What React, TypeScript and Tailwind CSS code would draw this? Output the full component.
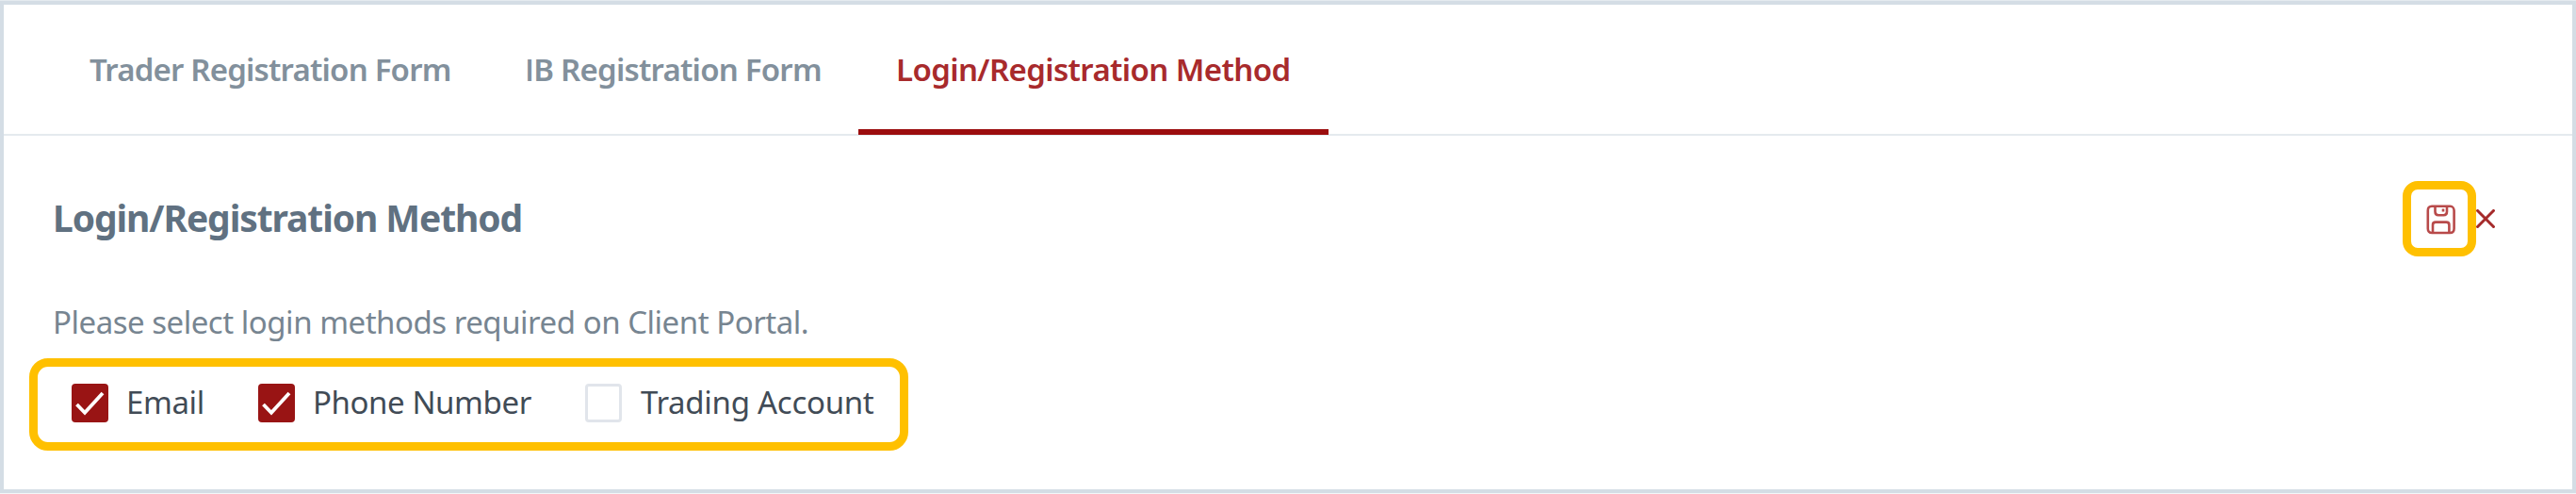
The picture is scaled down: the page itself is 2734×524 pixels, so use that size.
import { useState } from 'react';
import clsx from 'clsx';

const TABS = [
  { id: 'trader', width: 'w-[462px]', tracking: 'tracking-[-0.81px]' },
  { id: 'ib', width: 'w-[394px]', tracking: 'tracking-[-0.78px]' },
  { id: 'login', width: 'w-[499px]', tracking: 'tracking-[-0.62px]' },
];

const METHODS = [
  { id: 'email', label: 'Email', width: 'w-[198px]', gap: 'gap-[19px]', tracking: 'tracking-[-0.4px]' },
  { id: 'phone', label: 'Phone Number', width: 'w-[347px]', gap: 'gap-[19px]', tracking: 'tracking-[-0.41px]' },
  { id: 'account', label: 'Trading Account', width: 'w-[320px]', gap: 'gap-[20px]', tracking: 'tracking-[-0.28px]' },
];

function SaveIcon() {
  return (
    <svg width="32" height="32" viewBox="0 0 32 32" fill="none" stroke="#b84a4a" strokeWidth="2.6">
      <path d="M6 1.8H25.5C28 1.8 29.6 4 29.6 6.5V25.5Q29.6 30 25.2 30H6.2Q1.8 30 1.8 25.5V6.2Q1.8 1.8 6 1.8Z" />
      <path d="M9.5 2V7.5Q9.5 11.2 13 11.2H18.5Q22 11.2 22 7.5V2" />
      <path d="M18 4.5V7.5" />
      <path d="M7 30V21.5Q7 18.6 10 18.6H21.4Q24.4 18.6 24.4 21.5V30" />
    </svg>
  );
}

function CloseIcon() {
  return (
    <svg width="20" height="20" viewBox="0 0 20 20" fill="none" stroke="#a52a2a" strokeWidth="3">
      <path d="M0.5 0.5L19.5 19.5M19.5 0.5L0.5 19.5" />
    </svg>
  );
}

function Checkbox({ checked }: { checked: boolean }) {
  return (
    <span
      className={clsx(
        'h-[41px] w-[39px] shrink-0 rounded-[4px]',
        checked ? 'bg-[#991414]' : 'border-[3px] border-[#e1e5eb] bg-white',
      )}
    >
      {checked && (
        <svg width="39" height="41" viewBox="0 0 39 41" fill="none" stroke="#fff" strokeWidth="3.8">
          <path d="M5.5 22L14 30.8L33 10" />
        </svg>
      )}
    </span>
  );
}

function TabLabel({ id }: { id: string }) {
  if (id === 'trader') return <>Trader Registration Form</>;
  if (id === 'ib') {
    // Noto Sans draws a serifed capital I
    return (
      <>
        <span className="font-['Open_Sans',sans-serif]">I</span>B Registration Form
      </>
    );
  }
  return <>Login/Registration Method</>;
}

export default function App() {
  const [tab, setTab] = useState('login');
  const [selected, setSelected] = useState(['email', 'phone']);

  function toggle(id: string) {
    setSelected((prev) => (prev.includes(id) ? prev.filter((x) => x !== id) : [...prev, id]));
  }

  return (
    <div className="h-[524px] w-[2734px] border-t border-b border-t-[#e5ebf0] border-b-[#f3f6f8] bg-white font-['Noto_Sans',sans-serif]">
      <div className="flex h-[522px] flex-col border-4 border-[#d4dde5]">
        <nav className="flex h-[139px] shrink-0 border-b-2 border-[#e5eaee] pl-[51px]">
          {TABS.map((item) => (
            <button
              key={item.id}
              type="button"
              onClick={() => setTab(item.id)}
              className={clsx(
                'mb-[-1px] shrink-0 border-b-[6px] pt-[6px] pl-[40px] text-left text-[33px] leading-[48px] font-semibold whitespace-nowrap',
                item.width,
                item.tracking,
                tab === item.id ? 'border-[#9b0d0e] text-[#a82a2c]' : 'border-transparent text-[#82909c]',
              )}
            >
              <TabLabel id={item.id} />
            </button>
          ))}
        </nav>

        <section className="flex flex-col">
          <div className="mt-[48px] flex h-[80px] items-center pl-[52px]">
            <h2 className="mb-[2px] grow text-[39px] leading-[54px] font-bold tracking-[-1.1px] text-[#607181]">
              Login/Registration Method
            </h2>
            <div className="mr-[82px] flex items-center">
              <button
                type="button"
                className="flex h-[80px] w-[78px] items-center justify-center rounded-[16px] border-[9px] border-[#ffc000] pt-[1px] pl-[3px]"
              >
                <SaveIcon />
              </button>
              <button type="button">
                <CloseIcon />
              </button>
            </div>
          </div>

          <p className="mt-[46px] pl-[52px] text-[33px] leading-[48px] tracking-[-0.48px] text-[#778591]">
            Please select login methods required on Client Portal.
          </p>

          <div className="mt-[14px] ml-[27px] flex h-[98px] w-[933px] items-center rounded-[20px] border-[9px] border-[#ffc000] pb-[4px] pl-[36px]">
            {METHODS.map((method) => (
              <button
                key={method.id}
                type="button"
                onClick={() => toggle(method.id)}
                className={clsx(
                  'flex shrink-0 items-center text-[33px] leading-[48px] whitespace-nowrap text-[#414b56]',
                  method.width,
                  method.gap,
                  method.tracking,
                )}
              >
                <Checkbox checked={selected.includes(method.id)} />
                {method.label}
              </button>
            ))}
          </div>
        </section>
      </div>
    </div>
  );
}
